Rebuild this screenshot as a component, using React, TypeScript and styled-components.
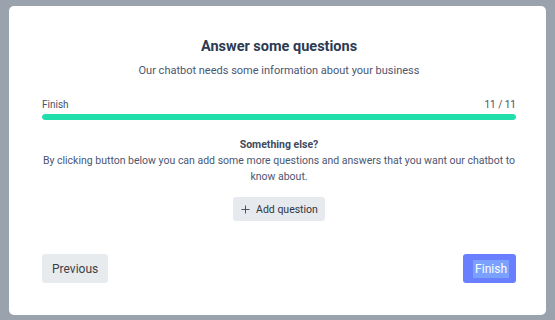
import { createGlobalStyle } from 'styled-components';
import styled from 'styled-components';

const GlobalStyle = createGlobalStyle`
	html, body {
		margin: 0;
		padding: 0;
		background: #9aa2ae;
		font-family: Roboto, 'Liberation Sans', sans-serif;
	}
	* {
		box-sizing: border-box;
	}
`;

const App = () => {
	return (
		<>
			<GlobalStyle />
			<Page>
				<Card>
					<Header>
						<Title>Answer some questions</Title>
						<Subtitle>Our chatbot needs some information about your business</Subtitle>
					</Header>
					<Progress>
						<ProgressLabels>
							<span>Finish</span>
							<span>11 / 11</span>
						</ProgressLabels>
						<Track>
							<Fill style={{ width: `${(11 / 11) * 100}%` }} />
						</Track>
					</Progress>
					<Extra>
						<ExtraTitle>Something else?</ExtraTitle>
						<ExtraText>
							By clicking button below you can add some more questions and answers that you want our
							chatbot to know about.
						</ExtraText>
						<AddButton>
							<PlusIcon width="9" height="9" viewBox="0 0 9 9">
								<path d="M4.5 0.5v8M0.5 4.5h8" stroke="#3c4350" strokeWidth="0.9" />
							</PlusIcon>
							Add question
						</AddButton>
					</Extra>
					<Footer>
						<NavButton $primary={false}>Previous</NavButton>
						<NavButton $primary>
							<Selected>Finish</Selected>
						</NavButton>
					</Footer>
				</Card>
			</Page>
		</>
	);
};

export default App;

const Page = styled.div`
	width: 555px;
	height: 320px;
	padding: 6px 9px 4px 9px;
`;

const Card = styled.div`
	width: 537px;
	height: 309px;
	background: #ffffff;
	border-radius: 5px;
	padding: 31px 30px 0 33px;
	display: flex;
	flex-direction: column;
`;

const Header = styled.div`
	display: flex;
	flex-direction: column;
	align-items: center;
	gap: 6px;
`;

const Title = styled.h1`
	margin: 0;
	font-size: 14.5px;
	line-height: 20px;
	font-weight: 700;
	color: #2c3a52;
`;

const Subtitle = styled.p`
	margin: 0;
	font-size: 11px;
	line-height: 16px;
	color: #4b5670;
`;

const Progress = styled.div`
	margin-top: 19px;
	display: flex;
	flex-direction: column;
	gap: 2px;
`;

const ProgressLabels = styled.div`
	display: flex;
	justify-content: space-between;
	font-size: 10px;
	line-height: 14px;
	color: #465066;
`;

const Track = styled.div`
	height: 6px;
	border-radius: 3px;
	background: #e5e8ec;
	overflow: hidden;
`;

const Fill = styled.div`
	height: 100%;
	border-radius: 3px;
	background: #20dfab;
`;

const Extra = styled.div`
	margin-top: 17px;
	display: flex;
	flex-direction: column;
	align-items: center;
	text-align: center;
`;

const ExtraTitle = styled.div`
	font-size: 10.5px;
	line-height: 16px;
	font-weight: 700;
	color: #3f4a5e;
`;

const ExtraText = styled.p`
	margin: 0;
	font-size: 10.5px;
	line-height: 16px;
	color: #4b5670;
`;

const AddButton = styled.button`
	margin-top: 12px;
	display: flex;
	align-items: center;
	gap: 6px;
	height: 24px;
	padding: 0 7px 0 8px;
	border: none;
	border-radius: 3px;
	background: #e6e9ed;
	font-family: inherit;
	font-size: 10.5px;
	color: #2f3644;
	cursor: pointer;
`;

const PlusIcon = styled.svg`
	display: block;
`;

const Footer = styled.div`
	margin-top: 33px;
	display: flex;
	justify-content: space-between;
	align-items: center;
`;

const NavButton = styled.button<{ $primary: boolean }>`
	height: 29px;
	padding: ${({ $primary }) => ($primary ? '0 7px 0 10px' : '0 10px')};
	border: none;
	border-radius: 3px;
	font-family: inherit;
	font-size: 12px;
	cursor: pointer;
	background: ${({ $primary }) => ($primary ? '#6a7fff' : '#e8ebee')};
	color: ${({ $primary }) => ($primary ? '#ffffff' : '#3b3f47')};
`;

const Selected = styled.span`
	display: inline-block;
	line-height: 18px;
	padding: 0 2px;
	background: #7ba1ff;
`;
